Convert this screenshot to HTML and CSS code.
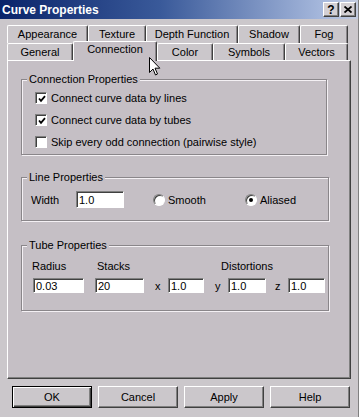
FILE: index.html
```html
<!DOCTYPE html>
<html lang="en">
  <head>
    <meta charset="UTF-8" />
    <title>Curve Properties</title>
    <link rel="stylesheet" href="styles.css">
  </head>
  <body>
    <div class="dialog">
      <div class="titlebar">
        <span class="title">Curve Properties</span>
        <div class="title-buttons">
          <span class="tbtn">?</span>
          <span class="tbtn">
            <svg width="8" height="7" viewBox="0 0 8 7"><path d="M0.5 0.5 L7.5 6.5 M7.5 0.5 L0.5 6.5" stroke="#000" stroke-width="1.8" fill="none"/></svg>
          </span>
        </div>
      </div>

      <div class="tabs">
        <div class="tab-row">
          <span class="tab w-appearance">Appearance</span>
          <span class="tab w-texture">Texture</span>
          <span class="tab w-depth">Depth Function</span>
          <span class="tab w-shadow">Shadow</span>
          <span class="tab w-fog">Fog</span>
        </div>
        <div class="tab-row">
          <span class="tab w-general">General</span>
          <span class="tab active w-connection">Connection</span>
          <span class="tab w-color">Color</span>
          <span class="tab w-symbols">Symbols</span>
          <span class="tab w-vectors">Vectors</span>
        </div>
      </div>

      <div class="panel">
        <!-- Connection Properties -->
        <fieldset class="group group-connection">
          <legend>Connection Properties</legend>
          <div class="check-row">
            <span class="check"><svg width="8" height="8" viewBox="0 0 8 8"><path d="M1 3.5 L3 5.8 L7 1.2" stroke="#000" stroke-width="1.8" fill="none"/></svg></span>
            <span>Connect curve data by lines</span>
          </div>
          <div class="check-row">
            <span class="check"><svg width="8" height="8" viewBox="0 0 8 8"><path d="M1 3.5 L3 5.8 L7 1.2" stroke="#000" stroke-width="1.8" fill="none"/></svg></span>
            <span>Connect curve data by tubes</span>
          </div>
          <div class="check-row">
            <span class="check"></span>
            <span>Skip every odd connection (pairwise style)</span>
          </div>
        </fieldset>

        <!-- Line Properties -->
        <fieldset class="group group-line">
          <legend>Line Properties</legend>
          <div class="line-row">
            <span class="width-label">Width</span>
            <input class="field width-field" type="text" value="1.0">
            <span class="radio-item smooth"><span class="radio"></span>Smooth</span>
            <span class="radio-item"><span class="radio on"></span>Aliased</span>
          </div>
        </fieldset>

        <!-- Tube Properties -->
        <fieldset class="group group-tube">
          <legend>Tube Properties</legend>
          <div class="tube-labels">
            <span class="lbl-radius">Radius</span>
            <span class="lbl-stacks">Stacks</span>
            <span>Distortions</span>
          </div>
          <div class="tube-fields">
            <input class="field f-radius" type="text" value="0.03">
            <input class="field f-stacks" type="text" value="20">
            <span class="axis">x</span>
            <input class="field f-x" type="text" value="1.0">
            <span class="axis">y</span>
            <input class="field f-y" type="text" value="1.0">
            <span class="axis axis-z">z</span>
            <input class="field f-z" type="text" value="1.0">
          </div>
        </fieldset>
      </div>

      <div class="actions">
        <button class="btn default">OK</button>
        <button class="btn">Cancel</button>
        <button class="btn">Apply</button>
        <button class="btn">Help</button>
      </div>

      <svg class="cursor" width="12" height="19" viewBox="0 0 12 19"><path d="M0.5 0.5 L0.5 15.5 L4 12 L6.5 18 L8.5 17 L6 11.2 L10.8 11.2 Z" fill="#fff" stroke="#000" stroke-width="1"/></svg>
    </div>
  </body>
</html>
```

FILE: styles.css
```css
body {
  margin: 0;
  font-family: "Liberation Sans", Arial, sans-serif;
  font-size: 11px;
  color: #000;
}
.dialog {
  position: relative;
  width: 359px;
  height: 417px;
  box-sizing: border-box;
  background: #cbc7cb;
  border-right: 1px solid #808080;
  overflow: hidden;
}
.titlebar {
  height: 19px;
  display: flex;
  align-items: center;
  justify-content: space-between;
  padding: 0 2px 0 2px;
  background: linear-gradient(to right, #0a246a 0%, #3a5a9a 45%, #a6b8dc 90%, #c4cce0 100%);
}
.title {
  color: #fff;
  font-weight: bold;
  font-size: 12px;
}
.title-buttons {
  display: flex;
  gap: 1px;
}
.tbtn {
  width: 16px;
  height: 15px;
  box-sizing: border-box;
  display: flex;
  align-items: center;
  justify-content: center;
  background: #d4d0d4;
  border: 1px solid;
  border-color: #fff #404040 #404040 #fff;
  box-shadow: inset -1px -1px #808080;
  font-weight: bold;
  font-size: 12px;
}

/* tabs */
.tabs {
  margin: 6px 0 0 7px;
  width: 341px;
}
.tab-row {
  display: flex;
  height: 18px;
}
.tab-row + .tab-row {
  height: 17px;
}
.tab {
  box-sizing: border-box;
  border-top: 1px solid #fff;
  border-left: 1px solid #fff;
  border-right: 1px solid #404040;
  box-shadow: inset -1px 0 #8a868a;
  border-radius: 2px 2px 0 0;
  text-align: center;
  line-height: 17px;
}
.tab.active {
  position: relative;
  z-index: 1;
  height: 20px;
  margin-top: -2px;
  background: #c5bfc5;
  line-height: 15px;
}
.w-appearance { width: 81px; }
.w-texture { width: 58px; }
.w-depth { width: 92px; }
.w-shadow { width: 62px; }
.w-fog { width: 48px; }
.w-general { width: 66px; }
.w-connection { width: 84px; }
.w-color { width: 56px; }
.w-symbols { width: 72px; }
.w-vectors { width: 63px; }

/* panel */
.panel {
  margin-left: 7px;
  width: 344px;
  height: 319px;
  box-sizing: border-box;
  padding: 12px 0 0 13px;
  background: #c5bfc5;
  border: 1px solid;
  border-color: #fff #404040 #404040 #fff;
  box-shadow: inset -1px -1px #808080;
}
.group {
  margin: 0;
  padding: 0;
  min-width: 0;
  width: 308px;
  box-sizing: border-box;
  border: 1px solid #8a868a;
  box-shadow: inset 1px 1px #f4f0f4, 1px 1px #f4f0f4;
}
.group legend {
  margin-left: 5px;
  padding: 0 2px;
  line-height: 13px;
  background: #c5bfc5;
}
.group-connection {
  width: 306px;
  padding: 1px 0 1px 0;
}
.group-line {
  margin-top: 16px;
  padding: 5px 0 10px 0;
}
.group-tube {
  margin-top: 18px;
  padding: 8px 0 17px 0;
}

.check-row {
  display: flex;
  align-items: center;
  gap: 4px;
  height: 22px;
  padding-left: 13px;
}
.check {
  width: 12px;
  height: 12px;
  box-sizing: border-box;
  display: flex;
  align-items: center;
  justify-content: center;
  background: #fff;
  border: 1px solid;
  border-color: #808080 #fff #fff #808080;
  box-shadow: inset 1px 1px #404040;
}
.check svg {
  margin: 1px 0 0 1px;
}

.line-row {
  display: flex;
  align-items: center;
  height: 21px;
  padding-left: 9px;
}
.width-label {
  width: 45px;
}
.field {
  box-sizing: border-box;
  height: 17px;
  margin: 0;
  padding: 0 2px;
  font-family: "Liberation Sans", Arial, sans-serif;
  font-size: 11px;
  color: #000;
  background: #fff;
  border: 1px solid;
  border-color: #808080 #fff #fff #808080;
  box-shadow: inset 1px 1px #404040;
  outline: none;
}
.width-field {
  width: 48px;
}
.radio-item {
  display: flex;
  align-items: center;
  gap: 3px;
}
.radio-item.smooth {
  width: 92px;
  margin-left: 29px;
}
.radio {
  width: 12px;
  height: 12px;
  box-sizing: border-box;
  border-radius: 50%;
  background: #fff;
  border: 1px solid;
  border-color: #808080 #fff #fff #808080;
  box-shadow: inset 1px 1px #404040;
  display: flex;
  align-items: center;
  justify-content: center;
}
.radio.on::after {
  content: "";
  width: 4px;
  height: 4px;
  border-radius: 50%;
  background: #000;
}

.tube-labels {
  display: flex;
  padding-left: 10px;
  line-height: 13px;
}
.lbl-radius { width: 65px; }
.lbl-stacks { width: 124px; }
.tube-fields {
  display: flex;
  align-items: center;
  margin-top: 5px;
  padding-left: 11px;
}
.tube-fields .field {
  height: 15px;
  line-height: 13px;
}
.f-radius { width: 51px; }
.f-stacks { width: 49px; margin-left: 11px; }
.f-x { width: 36px; }
.f-y { width: 38px; }
.f-z { width: 37px; }
.axis {
  width: 6px;
  margin: 0 7px 0 11px;
}
.axis-z {
  margin-left: 9px;
}

/* dialog buttons */
.actions {
  display: flex;
  gap: 6px;
  padding: 7px 0 0 12px;
}
.btn {
  width: 80px;
  height: 22px;
  box-sizing: border-box;
  padding: 0;
  font-family: "Liberation Sans", Arial, sans-serif;
  font-size: 11px;
  color: #000;
  background: #cbc7cb;
  border: 1px solid;
  border-color: #fff #404040 #404040 #fff;
  box-shadow: inset -1px -1px #808080;
}
.btn.default {
  border-color: #000;
  box-shadow: inset 1px 1px #fff, inset -1px -1px #404040, inset -2px -2px #808080;
}

.cursor {
  position: absolute;
  left: 149px;
  top: 57px;
  z-index: 2;
}
```
